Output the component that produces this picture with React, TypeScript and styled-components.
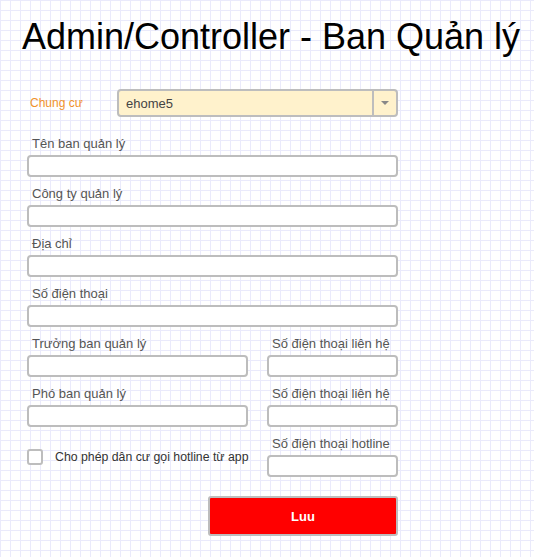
import React from "react";
import styled, { createGlobalStyle } from "styled-components";

const GlobalStyle = createGlobalStyle`
  html, body {
    margin: 0;
    padding: 0;
  }
  body {
    background-color: #ffffff;
    background-image:
      linear-gradient(to right, #eaeafb 1px, transparent 1px),
      linear-gradient(to bottom, #eaeafb 1px, transparent 1px);
    background-size: 10px 10px;
    background-position: 0 0;
    font-family: "Liberation Sans", Arial, sans-serif;
    min-height: 557px;
  }
`;

const Page = styled.div`
  width: 534px;
  min-height: 557px;
  box-sizing: border-box;
`;

const Title = styled.h1`
  margin: 16px 0 0;
  padding-left: 8px;
  font-size: 36px;
  line-height: 41px;
  font-weight: normal;
  color: #000;
  text-align: center;
`;

const Form = styled.form`
  margin: 32px 0 0 27px;
  width: 371px;
  display: flex;
  flex-direction: column;
`;

const SelectRow = styled.div`
  display: flex;
  align-items: center;
  height: 28px;
  margin-bottom: 20px;
`;

const SelectLabel = styled.span`
  width: 90px;
  padding-left: 3px;
  box-sizing: border-box;
  font-size: 12px;
  color: #f0922b;
`;

const Select = styled.div`
  flex: 1;
  height: 28px;
  box-sizing: border-box;
  border: 2px solid #bdbdbd;
  border-radius: 4px;
  background: #fff2cc;
  display: flex;
  align-items: stretch;
`;

const SelectValue = styled.span`
  flex: 1;
  display: flex;
  align-items: center;
  padding-left: 7px;
  font-size: 13px;
  color: #444;
`;

const Arrow = styled.span`
  width: 22px;
  border-left: 2px solid #bdbdbd;
  display: flex;
  align-items: center;
  justify-content: center;
  &::after {
    content: "";
    border-left: 4px solid transparent;
    border-right: 4px solid transparent;
    border-top: 4px solid #888;
  }
`;

const Field = styled.div<{ $w?: number }>`
  display: flex;
  flex-direction: column;
  width: ${(p) => (p.$w ? `${p.$w}px` : "100%")};
  margin-bottom: 10px;
`;

const Label = styled.label`
  height: 14px;
  line-height: 14px;
  padding-left: 5px;
  margin-bottom: 4px;
  font-size: 13px;
  color: #555;
  white-space: nowrap;
`;

const Input = styled.input`
  height: 22px;
  box-sizing: border-box;
  border: 2px solid #bdbdbd;
  border-radius: 4px;
  background: #fff;
  margin: 0;
  padding: 0 6px;
  font-family: inherit;
  font-size: 13px;
`;

const Row = styled.div<{ $center?: boolean }>`
  display: flex;
  justify-content: space-between;
  align-items: ${(p) => (p.$center ? "center" : "flex-start")};
`;

const CheckWrap = styled.label`
  width: 221px;
  display: flex;
  align-items: center;
  font-size: 12.3px;
  color: #333;
  margin-bottom: 10px;
  white-space: nowrap;
`;

const Box = styled.span`
  width: 16px;
  height: 16px;
  box-sizing: border-box;
  border: 2px solid #bdbdbd;
  border-radius: 3px;
  background: #fff;
  margin-right: 12px;
  flex-shrink: 0;
`;

const Actions = styled.div`
  display: flex;
  justify-content: flex-end;
  margin-top: 9px;
`;

const SaveButton = styled.button`
  width: 190px;
  height: 40px;
  box-sizing: border-box;
  border: 2px solid #bdbdbd;
  border-radius: 3px;
  background: #ff0000;
  color: #fff;
  font-family: inherit;
  font-weight: bold;
  font-size: 13px;
  cursor: pointer;
`;

export default function App() {
  return (
    <Page>
      <GlobalStyle />
      <Title>Admin/Controller - Ban Quản lý</Title>
      <Form onSubmit={(e) => e.preventDefault()}>
        <SelectRow>
          <SelectLabel>Chung cư</SelectLabel>
          <Select>
            <SelectValue>ehome5</SelectValue>
            <Arrow />
          </Select>
        </SelectRow>
        <Field>
          <Label>Tên ban quản lý</Label>
          <Input />
        </Field>
        <Field>
          <Label>Công ty quản lý</Label>
          <Input />
        </Field>
        <Field>
          <Label>Địa chỉ</Label>
          <Input />
        </Field>
        <Field>
          <Label>Số điện thoại</Label>
          <Input />
        </Field>
        <Row>
          <Field $w={221}>
            <Label>Trưởng ban quản lý</Label>
            <Input />
          </Field>
          <Field $w={131}>
            <Label>Số điện thoại liên hệ</Label>
            <Input />
          </Field>
        </Row>
        <Row>
          <Field $w={221}>
            <Label>Phó ban quản lý</Label>
            <Input />
          </Field>
          <Field $w={131}>
            <Label>Số điện thoại liên hệ</Label>
            <Input />
          </Field>
        </Row>
        <Row $center>
          <CheckWrap>
            <Box />
            Cho phép dân cư gọi hotline từ app
          </CheckWrap>
          <Field $w={131}>
            <Label>Số điện thoại hotline</Label>
            <Input />
          </Field>
        </Row>
        <Actions>
          <SaveButton type="submit">Luu</SaveButton>
        </Actions>
      </Form>
    </Page>
  );
}
